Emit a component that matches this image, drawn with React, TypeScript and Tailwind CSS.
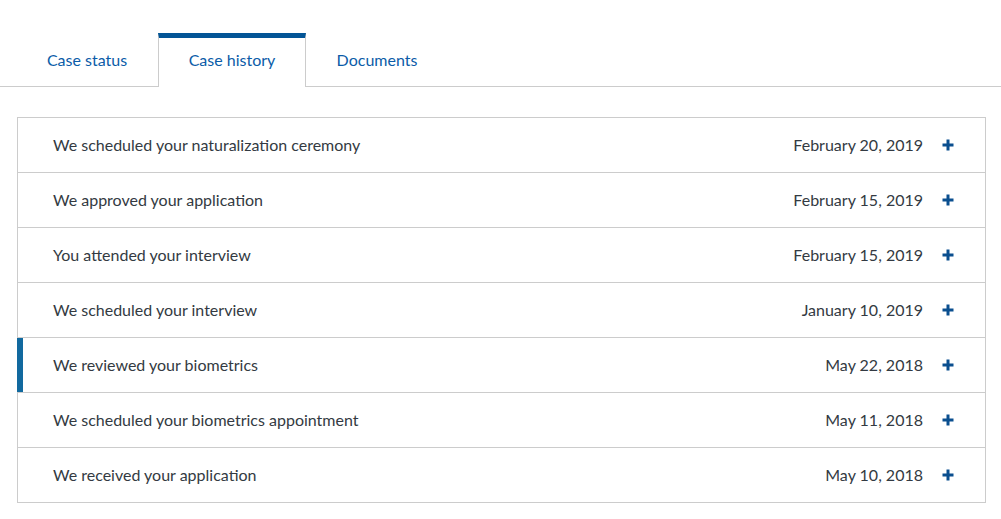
import React from "react";

const rows = [
  ["We scheduled your naturalization ceremony", "February 20, 2019"],
  ["We approved your application", "February 15, 2019"],
  ["You attended your interview", "February 15, 2019"],
  ["We scheduled your interview", "January 10, 2019"],
  ["We reviewed your biometrics", "May 22, 2018"],
  ["We scheduled your biometrics appointment", "May 11, 2018"],
  ["We received your application", "May 10, 2018"],
];

function Plus() {
  return (
    <svg width="12" height="12" viewBox="0 0 12 12" className="shrink-0">
      <rect x="4.5" y="0.5" width="3" height="11" fill="#0b4f8f" />
      <rect x="0.5" y="4.5" width="11" height="3" fill="#0b4f8f" />
    </svg>
  );
}

export default function App() {
  return (
    <div className="w-[1001px] h-[519px] bg-white" style={{ fontFamily: "Lato, 'Open Sans', sans-serif" }}>
      <div className="pt-[33px] flex items-start border-b border-[#cccccc] pl-[16px]">
        <div className="w-[142px] mt-[5px] h-[48px] pb-[4px] flex items-center justify-center text-[16px] text-[#0b5ca8]">
          Case status
        </div>
        <div className="w-[148px] -mb-px h-[54px] pb-[6px] bg-white border-t-[5px] border-t-[#035596] border-x border-x-[#cccccc] flex items-center justify-center text-[16px] text-[#0b5ca8]">
          <span>Case history</span>
        </div>
        <div className="w-[142px] mt-[5px] h-[48px] pb-[4px] flex items-center justify-center text-[16px] text-[#0b5ca8]">
          Documents
        </div>
      </div>
      <div className="mt-[30px] ml-[17px] w-[969px] border border-[#cccccc]">
        {rows.map(([t, d], i) => (
          <div
            key={i}
            className={
              i === 0
                ? "relative h-[54px] flex items-center pl-[35px] pr-[31px] pb-[1px] text-[16px] text-[#333a42]"
                : "relative h-[55px] border-t border-[#cccccc] flex items-center pl-[35px] pr-[31px] pb-[1px] text-[16px] text-[#333a42]"
            }
          >
            {i === 4 && <div className="absolute left-[-1px] top-0 bottom-0 w-[6px] bg-[#11699f]" />}
            <span className="flex-1">{t}</span>
            <span className="mr-[19px]">{d}</span>
            <Plus />
          </div>
        ))}
      </div>
    </div>
  );
}
